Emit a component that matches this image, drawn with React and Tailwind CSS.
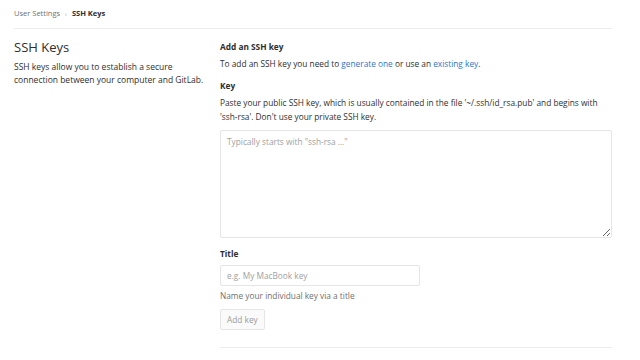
export default function App() {
  return (
    <div
      className="w-[640px] h-[360px] overflow-hidden bg-white text-[#2e2e2e]"
      style={{ fontFamily: '"Open Sans", "Noto Sans", sans-serif' }}
    >
      <div className="ml-[14px] w-[598px]">
        <div className="h-[29px] flex items-center border-b border-[#ededed] text-[7.5px]">
          <span className="text-[#707070]">User Settings</span>
          <span className="mx-[5px] text-[#999] text-[6px]">›</span>
          <span className="font-bold">SSH Keys</span>
        </div>

        <div className="flex">
          <div className="w-[206px] pt-[8px] pr-[12px]">
            <h2 className="text-[13px] leading-[20px]">SSH Keys</h2>
            <p className="mt-[3px] text-[8.5px] leading-[13px]">
              SSH keys allow you to establish a secure connection between your
              computer and GitLab.
            </p>
          </div>

          <div className="flex-1 pt-[11px] text-[8.3px] leading-[14px]">
            <h4 className="font-bold">Add an SSH key</h4>
            <p className="mt-[3px]">
              To add an SSH key you need to{" "}
              <a className="text-[#1f78d1]">generate one</a> or use an{" "}
              <a className="text-[#1f78d1]">existing key</a>.
            </p>
            <label className="block mt-[8px] font-bold">Key</label>
            <p className="mt-[3px]">
              Paste your public SSH key, which is usually contained in the file
              '~/.ssh/id_rsa.pub' and begins with 'ssh-rsa'. Don't use your
              private SSH key.
            </p>
            <textarea
              className="block mt-[6px] w-full h-[108px] border border-[#e5e5e5] rounded-[2px] px-[6px] py-[4px] text-[8.3px] placeholder:text-[#a0a0a0] outline-none"
              placeholder='Typically starts with "ssh-rsa …"'
            />
            <label className="block mt-[9px] font-bold">Title</label>
            <input
              className="block mt-[4px] w-[200px] h-[21px] border border-[#e5e5e5] rounded-[2px] px-[6px] text-[8.3px] placeholder:text-[#a0a0a0] outline-none"
              placeholder="e.g. My MacBook key"
            />
            <p className="mt-[3px] text-[#707070]">
              Name your individual key via a title
            </p>
            <button
              disabled
              className="mt-[6px] h-[21px] px-[6px] border border-[#e5e5e5] rounded-[2px] bg-[#fafafa] text-[#9a9a9a]"
            >
              Add key
            </button>
            <div className="mt-[17px] border-t border-[#ededed]" />
          </div>
        </div>
      </div>
    </div>
  );
}
